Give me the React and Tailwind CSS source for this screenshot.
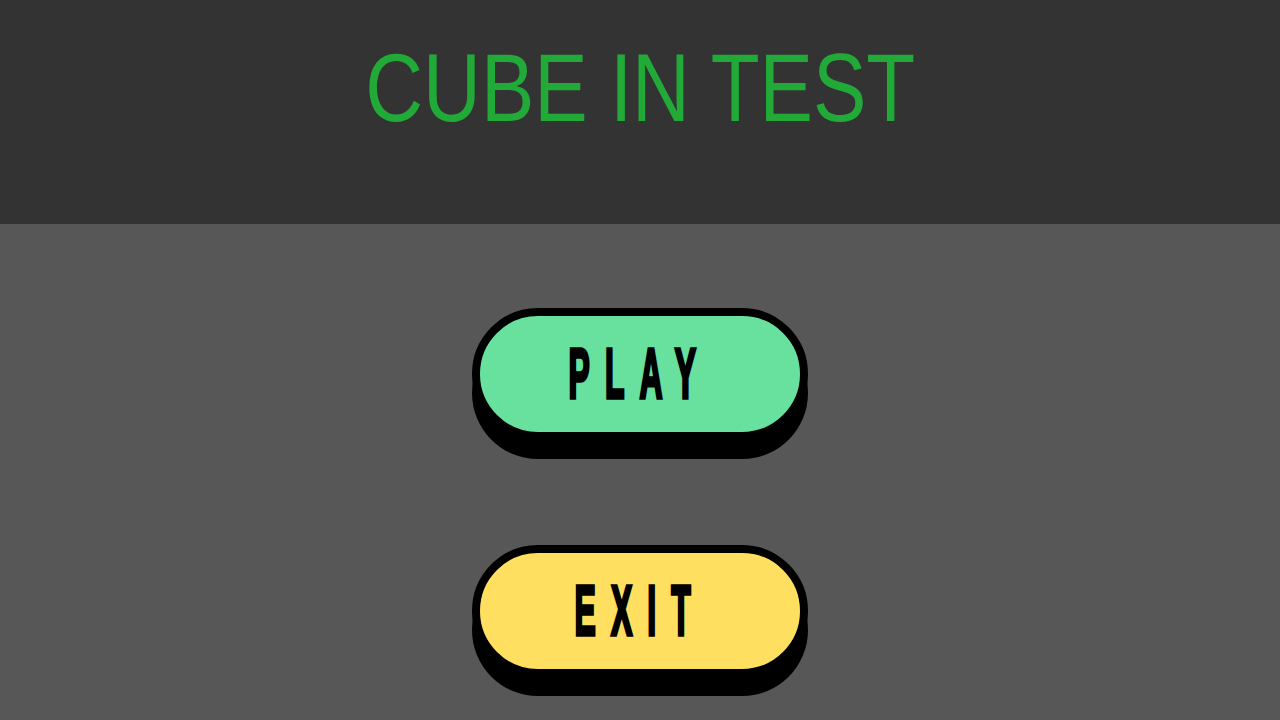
import React from 'react';

// Pill button with a hard black drop shadow
const MenuButton = ({ label, color }) => (
    <button
        className={`flex items-center justify-center w-[336px] h-[132px] rounded-full border-[8px] border-black shadow-[0_19px_0_0_#000] ${color}`}
    >
        <span
            className="inline-block font-bold text-[38px] leading-none tracking-[18px] text-black scale-x-[0.84] scale-y-[1.85] [-webkit-text-stroke:2px_#000]"
            style={{ fontFamily: '"Liberation Sans", Arial, sans-serif' }}
        >
            {label}
        </span>
    </button>
);

function App() {
    return (
        <div className="min-h-screen w-full bg-[#575757] flex flex-col">
            <header className="h-[224px] bg-[#333333] flex justify-center pt-[39px]">
                <h1
                    className="text-[97px] leading-none text-[#22aa38] scale-x-[0.825] whitespace-nowrap"
                    style={{ fontFamily: '"Liberation Sans", Arial, sans-serif' }}
                >
                    CUBE IN TEST
                </h1>
            </header>

            <main className="flex flex-col items-center pt-[84px] gap-[105px]">
                <MenuButton label="PLAY" color="bg-[#68e09e]" />
                <MenuButton label="EXIT" color="bg-[#ffdf5f]" />
            </main>
        </div>
    );
}

export default App;
